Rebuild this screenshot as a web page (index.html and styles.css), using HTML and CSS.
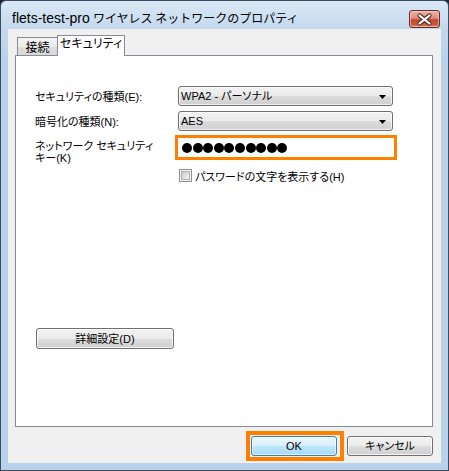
FILE: index.html
```html
<!DOCTYPE html>
<html lang="ja">
<head>
<meta charset="utf-8">
<title>flets-test-pro ワイヤレス ネットワークのプロパティ</title>
<link rel="stylesheet" href="styles.css">
</head>
<body>
<div class="window">
  <div class="titlebar">
    <div class="title"><span class="title-lat">flets-test-pro</span> <span class="title-jp">ワイヤレス ネットワークのプロパティ</span></div>
    <div class="close">
      <svg width="29" height="15" viewBox="0 0 29 15">
        <path d="M9.5 3.5 L19.5 11.5 M19.5 3.5 L9.5 11.5" stroke="#4a2e28" stroke-width="4.2" stroke-linecap="round" fill="none"/>
        <path d="M9.5 3.5 L19.5 11.5 M19.5 3.5 L9.5 11.5" stroke="#ffffff" stroke-width="2.2" stroke-linecap="round" fill="none"/>
      </svg>
    </div>
  </div>
  <div class="client">
    <div class="tabs">
      <div class="tab">接続</div>
      <div class="tab tab-active">セキュリティ</div>
    </div>
    <div class="panel">
      <div class="row">
        <div class="label">セキュリティの種類(E):</div>
        <div class="combo"><span>WPA2 - パーソナル</span>
          <svg class="arrow" width="7" height="4" viewBox="0 0 7 4"><path d="M0 0 H7 L3.5 4 Z" fill="#000"/></svg>
        </div>
      </div>
      <div class="row row-2">
        <div class="label">暗号化の種類(N):</div>
        <div class="combo"><span>AES</span>
          <svg class="arrow" width="7" height="4" viewBox="0 0 7 4"><path d="M0 0 H7 L3.5 4 Z" fill="#000"/></svg>
        </div>
      </div>
      <div class="row row-3">
        <div class="label label-2l">ネットワーク セキュリティ<br>キー(K)</div>
        <div class="password">
          <span class="dot"></span><span class="dot"></span><span class="dot"></span><span class="dot"></span><span class="dot"></span><span class="dot"></span><span class="dot"></span><span class="dot"></span><span class="dot"></span><span class="dot"></span>
        </div>
      </div>
      <div class="row row-check">
        <span class="checkbox"><span class="check-inner"></span></span>
        <span class="check-label">パスワードの文字を表示する(H)</span>
      </div>
      <div class="btn btn-detail">詳細設定(D)</div>
    </div>
    <div class="footer">
      <div class="ok-frame"><div class="btn btn-default">OK</div></div>
      <div class="btn btn-cancel">キャンセル</div>
    </div>
  </div>
</div>
</body>
</html>
```

FILE: styles.css
```css
* { box-sizing: border-box; }
html, body {
  margin: 0;
  padding: 0;
  background: #20262c;
}
body {
  width: 449px;
  height: 471px;
  overflow: hidden;
  font-family: "Liberation Sans", "Noto Sans CJK JP", sans-serif;
  font-size: 11px;
  color: #000;
  font-feature-settings: "palt";
}
.window {
  width: 449px;
  height: 471px;
  border: 1px solid #3a4d60;
  border-radius: 6px 6px 0 0;
  background: linear-gradient(to bottom, #dbe8f5 0, #c4d9ee 28px, #b9d1ea 60px, #b9d1ea 100%);
  padding: 0 7px 7px 7px;
  display: flex;
  flex-direction: column;
}
.titlebar {
  height: 29px;
  display: flex;
  justify-content: space-between;
  align-items: flex-start;
  padding-left: 4px;
}
.title {
  margin-top: 8px;
  line-height: 17px;
  white-space: nowrap;
}
.title-lat {
  font-family: "Liberation Sans", sans-serif;
  font-size: 14px;
}
.title-jp {
  font-family: "Noto Sans CJK JP", sans-serif;
  font-size: 12px;
  font-feature-settings: normal;
}
.close {
  margin-top: 9px;
  margin-right: 1px;
  width: 31px;
  height: 18px;
  border: 1px solid #6b2a20;
  border-radius: 3px;
  background: linear-gradient(to bottom, #eab2a5 0%, #dc8f7e 45%, #c6452f 55%, #c85a44 85%, #d88a72 100%);
  box-shadow: inset 0 0 0 1px rgba(255, 220, 210, 0.55);
  display: flex;
  align-items: center;
  justify-content: center;
}
.close svg { display: block; }
.client {
  flex: 1;
  background: #f0f0f0;
  padding: 6px 8px 7px 7px;
  display: flex;
  flex-direction: column;
}
.tabs {
  display: flex;
  align-items: flex-end;
  height: 21px;
  margin-bottom: -1px;
  padding-left: 2px;
}
.tab {
  width: 41px;
  height: 19px;
  border: 1px solid #898c95;
  border-bottom: none;
  background: linear-gradient(to bottom, #f3f3f3 0%, #ebebeb 50%, #dedede 50%, #d8d8d8 100%);
  text-align: center;
  line-height: 18px;
  padding-top: 1px;
  font-size: 12px;
}
.tab-active {
  position: relative;
  z-index: 2;
  width: 68px;
  height: 21px;
  margin-left: -1px;
  background: #fff;
  line-height: 17px;
  padding-top: 0;
}
.panel {
  position: relative;
  z-index: 1;
  height: 372px;
  border: 1px solid #898c95;
  background: #fff;
  padding: 30px 0 0 19px;
  display: flex;
  flex-direction: column;
}
.row {
  display: flex;
  align-items: center;
  height: 20px;
}
.row-2 { margin-top: 5px; }
.row-3 {
  margin-top: 7px;
  height: 19px;
  align-items: flex-start;
}
.label {
  width: 143px;
  flex: none;
  white-space: nowrap;
}
.label-2l {
  line-height: 12px;
  padding-top: 2px;
}
.combo {
  width: 215px;
  height: 20px;
  border: 1px solid #707070;
  border-radius: 3px;
  background: linear-gradient(to bottom, #f2f2f2 0%, #ebebeb 50%, #dddddd 50%, #cfcfcf 100%);
  box-shadow: inset 0 0 0 1px rgba(255, 255, 255, 0.7);
  padding: 0 6px 0 2px;
  display: flex;
  align-items: center;
  justify-content: space-between;
  line-height: 16px;
}
.arrow { display: block; margin-top: 1px; }
.password {
  width: 216px;
  height: 19px;
  background: #fff;
  outline: 3px solid #ff8000;
  padding-left: 4px;
  display: flex;
  align-items: center;
  gap: 0.6px;
}
.dot {
  width: 10px;
  height: 10px;
  border-radius: 50%;
  background: #000;
}
.row-check {
  margin-top: 12px;
  height: 13px;
  padding-left: 144px;
}
.checkbox {
  width: 13px;
  height: 13px;
  border: 1px solid #8e8f8f;
  background: #f4f4f4;
  display: flex;
  align-items: center;
  justify-content: center;
}
.check-inner {
  width: 9px;
  height: 9px;
  border: 1px solid #b0b0b0;
  background: linear-gradient(135deg, #c9cbce 0%, #e4e4e4 60%, #f6f6f6 100%);
}
.check-label {
  margin-left: 3px;
  white-space: nowrap;
}
.btn {
  height: 20px;
  border: 1px solid #707070;
  border-radius: 3px;
  background: linear-gradient(to bottom, #f2f2f2 0%, #ebebeb 50%, #dddddd 50%, #cfcfcf 100%);
  box-shadow: inset 0 0 0 1px rgba(255, 255, 255, 0.75);
  display: flex;
  align-items: center;
  justify-content: center;
  line-height: 16px;
  white-space: nowrap;
}
.btn-detail {
  margin-top: 146px;
  margin-left: 1px;
  width: 138px;
  height: 21px;
}
.footer {
  margin-top: 9px;
  display: flex;
  justify-content: flex-end;
  gap: 10px;
}
.btn-default, .btn-cancel { width: 86px; }
.ok-frame {
  border: 4px solid #ff8000;
  padding: 1px 3px 1px 1px;
  margin: -5px -7px -5px -5px;
}
.btn-default {
  border-color: #3c7fb1;
  background: linear-gradient(to bottom, #eaf6fd 0%, #d9f0fc 50%, #bee6fd 50%, #a7d9f5 100%);
  box-shadow: inset 0 0 0 1px rgba(255, 255, 255, 0.6);
}
```
